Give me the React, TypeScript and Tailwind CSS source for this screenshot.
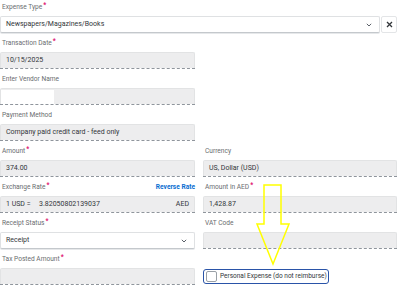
import React from 'react';

function Label({ text, required, right }: { text: string; required?: boolean; right?: React.ReactNode }) {
  return (
    <div className="flex h-[12px] mb-[2px] items-center justify-between pl-[2px] text-[6.6px] text-[#6a6d70]">
      <span>
        {text}
        {required && <span className="relative -top-[2px] ml-[1px] text-[#e0116f] font-bold">*</span>}
      </span>
      {right}
    </div>
  );
}

function ReadOnly({ children }: { children?: React.ReactNode }) {
  return (
    <div className="flex h-[17px] flex-col">
      <div className="flex flex-1 items-center rounded-t-[2px] border-x border-t border-[#e2e3e4] bg-[#ededee] px-[5px] text-[7px] text-[#32363a]">
        {children}
      </div>
      <div className="border-b border-dashed border-[#8f959c]" />
    </div>
  );
}

function Chevron() {
  return (
    <svg width="6" height="4" viewBox="0 0 6 4" className="shrink-0">
      <path d="M0.8 0.8 L3 3 L5.2 0.8" fill="none" stroke="#5b6068" strokeWidth="1" />
    </svg>
  );
}

function Select({ value }: { value: string }) {
  return (
    <div className="flex h-[17px] flex-1 items-center justify-between rounded-[2px] border border-[#dfe1e3] border-b-[#c4c8cc] bg-white pl-[5px] pr-[7px] text-[7px] text-[#32363a] shadow-[0_1px_0_#e6e8ea]">
      <span>{value}</span>
      <Chevron />
    </div>
  );
}

export default function App() {
  return (
    <div className="relative h-[285px] w-[400px] overflow-hidden bg-white" style={{ fontFamily: 'Roboto, "Liberation Sans", Arial, sans-serif' }}>
      <div className="grid grid-cols-[195px_194px] gap-x-[8px] gap-y-[5px] pt-[2px]">
        {/* expense type */}
        <div className="col-span-2 w-[397px]">
          <Label text="Expense Type" required />
          <div className="flex gap-[1px]">
            <Select value="Newspapers/Magazines/Books" />
            <div className="flex h-[17px] w-[16px] items-center justify-center rounded-[2px] border border-[#e3e5e7] bg-white">
              <svg width="7" height="7" viewBox="0 0 7 7">
                <path d="M1 1 L6 6 M6 1 L1 6" stroke="#32363a" strokeWidth="1.3" />
              </svg>
            </div>
          </div>
        </div>

        <div>
          <Label text="Transaction Date" required />
          <ReadOnly>10/15/2025</ReadOnly>
        </div>
        <div />

        <div>
          <Label text="Enter Vendor Name" />
          <div className="flex h-[17px] flex-col">
            <div className="flex flex-1 items-center rounded-t-[2px] border-x border-t border-[#e2e3e4] bg-[#ededee]">
              <div className="h-[14px] w-[53px] bg-white" />
            </div>
            <div className="border-b border-dashed border-[#8f959c]" />
          </div>
        </div>
        <div />

        <div>
          <Label text="Payment Method" />
          <ReadOnly>Company paid credit card - feed only</ReadOnly>
        </div>
        <div />

        <div>
          <Label text="Amount" required />
          <ReadOnly>374.00</ReadOnly>
        </div>
        <div>
          <Label text="Currency" />
          <ReadOnly>US, Dollar (USD)</ReadOnly>
        </div>

        <div>
          <Label
            text="Exchange Rate"
            required
            right={<span className="font-bold text-[#0a6ed1]">Reverse Rate</span>}
          />
          <ReadOnly>
            <span className="w-[33px]">1 USD =</span>
            <span className="flex-1">3.82050802139037</span>
            <span>AED</span>
          </ReadOnly>
        </div>
        <div>
          <Label text="Amount in AED" required />
          <ReadOnly>1,428.87</ReadOnly>
        </div>

        <div>
          <Label text="Receipt Status" required />
          <div className="flex">
            <Select value="Receipt" />
          </div>
        </div>
        <div>
          <Label text="VAT Code" />
          <ReadOnly />
        </div>

        <div>
          <Label text="Tax Posted Amount" required />
          <ReadOnly />
        </div>
        <div className="flex items-end">
          <div className="mb-[1px] flex h-[15px] w-[126px] items-center gap-[3px] whitespace-nowrap rounded-[3px] border border-[#2a54a8] pl-[2px] text-[6.5px] text-[#32363a]">
            <div className="h-[11px] w-[11px] shrink-0 rounded-[2px] border border-[#9aa0a6] bg-white" />
            <span>Personal Expense (do not reimburse)</span>
          </div>
        </div>
      </div>

      {/* yellow annotation arrow */}
      <svg className="pointer-events-none absolute left-0 top-0" width="400" height="285">
        <polygon
          points="264,185 281,185 281,224 289,224 273,264 257,224 264,224"
          fill="none"
          stroke="#ffff00"
          strokeWidth="1.5"
          strokeLinejoin="miter"
        />
      </svg>
    </div>
  );
}
